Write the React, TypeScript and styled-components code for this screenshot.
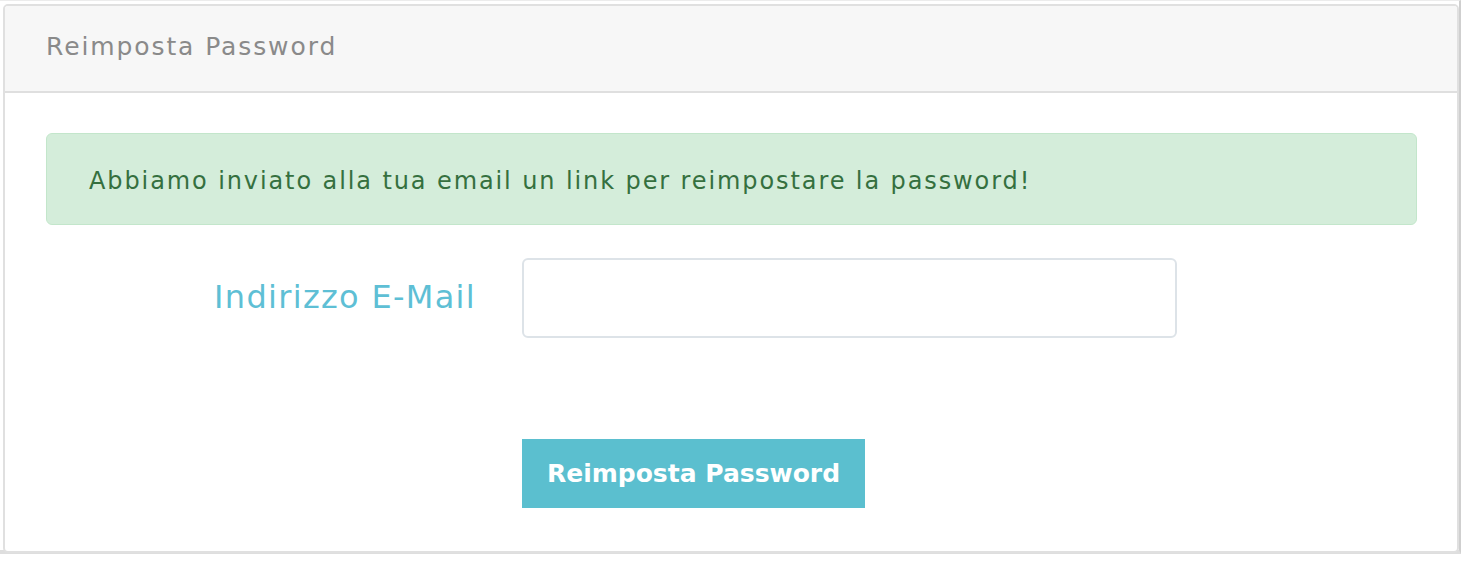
import React from "react";
import styled, { createGlobalStyle } from "styled-components";

const GlobalStyle = createGlobalStyle`
  html, body {
    margin: 0;
    padding: 0;
    background: #ffffff;
    font-family: "DejaVu Sans", "Open Sans", sans-serif;
  }
`;

const Page = styled.div`
  width: 1461px;
  height: 554px;
  padding: 3px 0 0 3px;
  box-sizing: border-box;
  border-right: 2px solid #cfcfcf;
  border-bottom: 4px solid #dedede;
  border-top: 1px solid #ececec;
`;

const Card = styled.div`
  width: 1456px;
  height: 549px;
  box-sizing: border-box;
  border: 2px solid #e0e0e0;
  border-radius: 5px;
  background: #ffffff;
  display: flex;
  flex-direction: column;
  overflow: hidden;
`;

const CardHeader = styled.div`
  height: 87px;
  box-sizing: border-box;
  background: #f7f7f7;
  border-bottom: 2px solid #dfdfdf;
  display: flex;
  align-items: center;
  padding: 0 0 5px 41px;
  font-size: 25px;
  letter-spacing: 1.9px;
  color: #8a8a8a;
`;

const CardBody = styled.div`
  padding: 40px 40px 0 41px;
  display: flex;
  flex-direction: column;
`;

const Alert = styled.div`
  height: 92px;
  box-sizing: border-box;
  background: #d4edda;
  border: 1.5px solid #c3e6cb;
  border-radius: 6px;
  color: #35703f;
  font-size: 24px;
  letter-spacing: 1.9px;
  display: flex;
  align-items: center;
  padding: 3px 0 0 42px;
`;

const FormRow = styled.div`
  display: grid;
  grid-template-columns: 430px 655px;
  column-gap: 46px;
  align-items: center;
  margin-top: 33px;
`;

const Label = styled.label`
  text-align: right;
  color: #5ebfd5;
  font-size: 32px;
  letter-spacing: 1.3px;
  padding-bottom: 2px;
`;

const Input = styled.input`
  height: 80px;
  box-sizing: border-box;
  border: 2px solid #dde3e8;
  border-radius: 6px;
  outline: none;
  font-size: 22px;
  padding: 0 18px;
`;

const ButtonRow = styled.div`
  display: flex;
  padding-left: 476px;
  margin-top: 101px;
`;

const Button = styled.button`
  width: 343px;
  height: 69px;
  border: none;
  border-radius: 0;
  background: #5bbfcf;
  color: #ffffff;
  font-family: "DejaVu Sans", "Open Sans", sans-serif;
  font-weight: 700;
  font-size: 25px;
  padding: 0;
  cursor: pointer;
`;

export default function App() {
  return (
    <>
      <GlobalStyle />
      <Page>
        <Card>
          <CardHeader>Reimposta Password</CardHeader>
          <CardBody>
            <Alert>
              Abbiamo inviato alla tua email un link per reimpostare la password!
            </Alert>
            <FormRow>
              <Label htmlFor="email">Indirizzo E-Mail</Label>
              <Input id="email" type="email" />
            </FormRow>
            <ButtonRow>
              <Button>Reimposta Password</Button>
            </ButtonRow>
          </CardBody>
        </Card>
      </Page>
    </>
  );
}
